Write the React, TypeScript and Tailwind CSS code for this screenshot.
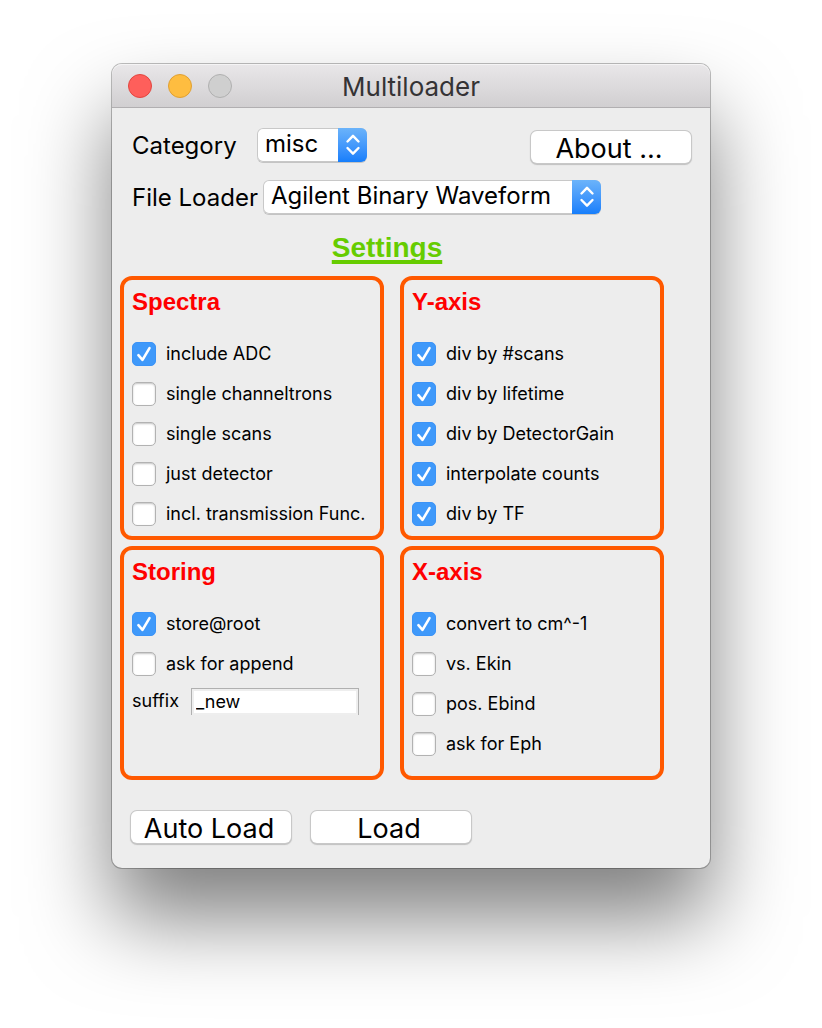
import { useState, type ReactNode } from "react";

function WindowButton({ label, className }: { label: string; className: string }) {
  return <button type="button" aria-label={label} className={`size-6 rounded-full border ${className}`} />;
}

function PopUp({ id, options, className }: { id: string; options: string[]; className: string }) {
  return (
    <div
      className={`relative h-[34px] rounded-md bg-white shadow-[inset_0_0_0_1px_#c8c8c8,0_1px_0_#c4c4c4] ${className}`}
    >
      <select
        id={id}
        className="h-full w-full appearance-none rounded-md bg-transparent pr-9 pb-1 pl-2 text-2xl leading-7 text-black outline-none"
      >
        {options.map((option) => (
          <option key={option}>{option}</option>
        ))}
      </select>
      <span className="pointer-events-none absolute inset-y-0 right-0 flex w-[29px] items-center justify-center rounded-r-md bg-linear-to-b from-[#6bb3fa] to-[#157efb]">
        <svg width="16" height="22" viewBox="0 0 16 22" fill="none" stroke="white" strokeWidth="2.4" strokeLinecap="round" strokeLinejoin="round">
          <path d="M2.5 7.5 8 1.8 13.5 7.5M2.5 14 8 19.7 13.5 14" />
        </svg>
      </span>
    </div>
  );
}

function PushButton({ children }: { children: ReactNode }) {
  return (
    <button
      type="button"
      className="flex h-8 w-40 items-center justify-center rounded-md bg-white pt-1 pr-1 text-[27px] leading-7 text-black shadow-[0_0_0_1px_#c8c8c8,0_1px_1px_1px_#c0c0c0]"
    >
      {children}
    </button>
  );
}

function CheckRow({ label, initial = false }: { label: string; initial?: boolean }) {
  const [checked, setChecked] = useState(initial);
  return (
    <label className="flex h-10 items-center gap-2.5 text-lg whitespace-nowrap">
      <span className="grid size-6 shrink-0 place-items-center">
        <input
          type="checkbox"
          checked={checked}
          onChange={() => setChecked(!checked)}
          className="col-start-1 row-start-1 size-6 appearance-none rounded-[5px] border border-[#b2b2b2] bg-white shadow-[inset_0_1px_2px_#c4c4c4] checked:border-[#3b93f7] checked:bg-[#3f99fa] checked:shadow-none"
        />
        {checked && (
          <svg className="pointer-events-none col-start-1 row-start-1" width="24" height="24" viewBox="0 0 24 24" fill="none">
            <path d="m6.4 13.2 4.1 4.6 7-11.6" stroke="white" strokeWidth="2.6" strokeLinecap="round" strokeLinejoin="round" />
          </svg>
        )}
      </span>
      {label}
    </label>
  );
}

function Group({ title, className, children }: { title: string; className: string; children: ReactNode }) {
  return (
    <section className={`rounded-xl border-4 border-[#ff5900] px-2 pt-1 ${className}`}>
      <h2 className="mb-3.5 font-['Liberation_Sans',sans-serif] text-2xl leading-9 font-bold text-[#ff0000]">
        {title}
      </h2>
      {children}
    </section>
  );
}

export default function App() {
  return (
    <div className="min-h-screen bg-white px-28 pt-16 pb-40 font-[Inter,sans-serif] text-black">
      <main className="rounded-[10px] bg-[#ededed] shadow-[0_0_0_1px_rgba(0,0,0,0.25),0_50px_84px_rgba(0,0,0,0.5)]">
        <header className="grid h-11 grid-cols-[1fr_auto_1fr] items-center rounded-t-[10px] border-b border-[#b1afb1] bg-linear-to-b from-[#e9e7e9] to-[#d1cfd1] px-4 shadow-[inset_0_1px_0_#f5f4f5]">
          <div className="flex gap-4">
            <WindowButton label="Close" className="border-[#e2463f] bg-[#fe5f5b]" />
            <WindowButton label="Minimize" className="border-[#e0a032] bg-[#febd40]" />
            <WindowButton label="Zoom" className="border-[#b0b0b0] bg-[#cfcfcf]" />
          </div>
          <h1 className="pt-0.5 text-[26px] leading-8 text-[#353335]">Multiloader</h1>
        </header>

        <div className="pt-5 pb-[25px]">
          <div className="flex items-start pr-[19px] pl-5 text-2xl">
            <label htmlFor="category" className="w-[125px] pt-0.5 leading-8">Category</label>
            <PopUp id="category" options={["misc"]} className="w-[110px]" />
            <div className="ml-auto pt-[3px]">
              <PushButton>About ...</PushButton>
            </div>
          </div>
          <div className="mt-[17px] flex items-start pl-5 text-2xl">
            <label htmlFor="loader" className="w-[131px] pt-0.5 leading-8 whitespace-nowrap">File Loader</label>
            <PopUp id="loader" options={["Agilent Binary Waveform"]} className="w-[338px]" />
          </div>

          <div className="mt-4 mr-[46px] ml-2">
            <h2 className="mb-2.5 pr-2.5 text-center font-['Liberation_Sans',sans-serif] text-[28px] leading-9 font-bold text-[#66cc00] underline decoration-4 underline-offset-3 [text-decoration-skip-ink:none]">
              Settings
            </h2>
            <div className="grid grid-cols-2 gap-x-4 gap-y-1.5">
              <Group title="Spectra" className="pb-0.5">
                <CheckRow label="include ADC" initial />
                <CheckRow label="single channeltrons" />
                <CheckRow label="single scans" />
                <CheckRow label="just detector" />
                <CheckRow label="incl. transmission Func." />
              </Group>
              <Group title="Y-axis" className="pb-0.5">
                <CheckRow label="div by #scans" initial />
                <CheckRow label="div by lifetime" initial />
                <CheckRow label="div by DetectorGain" initial />
                <CheckRow label="interpolate counts" initial />
                <CheckRow label="div by TF" initial />
              </Group>
              <Group title="Storing" className="pb-3">
                <CheckRow label="store@root" initial />
                <CheckRow label="ask for append" />
                <div className="mt-[3px] flex items-center text-lg">
                  <label htmlFor="suffix" className="w-[59px]">suffix</label>
                  <input
                    id="suffix"
                    defaultValue="_new"
                    className="h-[27px] w-[168px] border-x border-t border-[#b0b0b0] bg-white px-1 shadow-[inset_0_0_0_2px_#eeeeee] outline-none"
                  />
                </div>
              </Group>
              <Group title="X-axis" className="pb-3">
                <CheckRow label="convert to cm^-1" initial />
                <CheckRow label="vs. Ekin" />
                <CheckRow label="pos. Ebind" />
                <CheckRow label="ask for Eph" />
              </Group>
            </div>
          </div>

          <div className="mt-[31px] flex gap-5 pl-[19px]">
            <PushButton>Auto Load</PushButton>
            <PushButton>Load</PushButton>
          </div>
        </div>
      </main>
    </div>
  );
}
